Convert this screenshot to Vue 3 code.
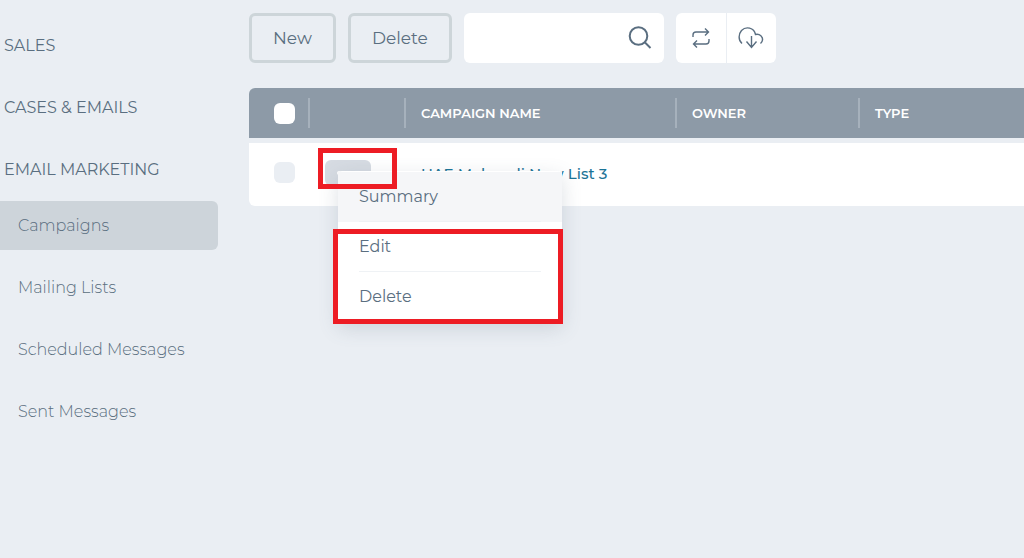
<script setup>
import { ref } from "vue";

const sections = ["Sales", "Cases & Emails", "Email Marketing"];
const links = ["Campaigns", "Mailing Lists", "Scheduled Messages", "Sent Messages"];
const active = ref("Campaigns");

const menu = ["Summary", "Edit", "Delete"];
const hovered = ref("Summary");

const search = ref("");
const allChecked = ref(false);
const campaigns = ref([{ id: 1, name: "UAE Mahendi New List 3", checked: false }]);
</script>

<template>
  <div class="page">
    <nav class="sidebar">
      <h2 v-for="section in sections" :key="section" class="section">{{ section }}</h2>
      <a
        v-for="link in links"
        :key="link"
        href="#"
        class="link"
        :class="{ active: link === active }"
        @click.prevent="active = link"
      >
        {{ link }}
      </a>
    </nav>

    <main class="main">
      <div class="toolbar">
        <button type="button" class="btn">New</button>
        <button type="button" class="btn">Delete</button>
        <div class="search">
          <input v-model="search" type="text" aria-label="Search" />
          <svg width="24" height="24" viewBox="0 0 24 24">
            <circle cx="10.5" cy="10" r="8.8" />
            <path d="M17 16.500l5.500 5.500" />
          </svg>
        </div>
        <div class="group">
          <button type="button" aria-label="Refresh">
            <svg width="20" height="22" viewBox="0 0 20 22">
              <path d="M2 10V8q0-3 3-3h12.500M14 1.500L17.500 5L14 8.500M18 12v2q0 3-3 3H2.500M6 13.500L2.500 17L6 20.500" />
            </svg>
          </button>
          <button type="button" aria-label="Download">
            <svg width="26" height="24" viewBox="0 0 26 24">
              <path d="M4 17.500C0 14 .5 8 3.500 4.500C8 0 16 1.500 17.500 8.500C22 7.500 25 11 24.500 14Q24.300 16 22.500 17.500M13.500 10v11.500M8.500 15.500L13.500 21.500L18.500 15.500" />
            </svg>
          </button>
        </div>
      </div>

      <table class="table">
        <thead>
          <tr>
            <th class="check">
              <input v-model="allChecked" type="checkbox" aria-label="Select all campaigns" />
            </th>
            <th class="actions"></th>
            <th class="name">Campaign Name</th>
            <th class="owner">Owner</th>
            <th>Type</th>
          </tr>
        </thead>
        <tbody>
          <tr v-for="campaign in campaigns" :key="campaign.id">
            <td class="check">
              <input v-model="campaign.checked" type="checkbox" aria-label="Select campaign" />
            </td>
            <td class="actions">
              <div class="more-wrap">
                <button type="button" class="more" aria-label="Actions">
                  <i></i><i></i><i></i>
                </button>
                <div class="menu">
                  <div class="options">
                    <button
                      v-for="item in menu"
                      :key="item"
                      type="button"
                      class="item"
                      :class="{ hover: item === hovered }"
                      @mouseenter="hovered = item"
                    >
                      <span>{{ item }}</span>
                    </button>
                  </div>
                  <div class="mark mark-options"></div>
                </div>
                <div class="mark mark-more"></div>
              </div>
            </td>
            <td><a href="#">{{ campaign.name }}</a></td>
            <td></td>
            <td></td>
          </tr>
        </tbody>
      </table>
    </main>
  </div>
</template>

<style>
body {
  margin: 0;
  background: #eaeef3;
}
</style>

<style scoped>
.page {
  display: flex;
  gap: 31px;
  min-height: 100vh;
  overflow: hidden;
  font-family: Montserrat, Inter, "Open Sans", sans-serif;
  font-size: 16px;
  line-height: 24px;
  color: #5a6e80;
}

.page *,
.page *::before {
  box-sizing: border-box;
}

button,
input {
  font: inherit;
  color: inherit;
}

button {
  cursor: pointer;
}

a {
  text-decoration: none;
}

.sidebar {
  flex: 0 0 218px;
  padding-top: 15px;
}

.section {
  margin: 0;
  padding: 19px 4px;
  font-size: 16px;
  font-weight: 400;
  text-transform: uppercase;
}

.link {
  display: block;
  margin-bottom: 13px;
  padding: 13px 18px 12px;
  border-radius: 0 6px 6px 0;
  color: #5a6e80;
  font-weight: 300;
}

.link.active {
  background: #cdd4da;
}

.main {
  flex: 1;
  min-width: 0;
  padding-top: 13px;
}

.toolbar {
  display: flex;
  gap: 12px;
  height: 50px;
  margin-bottom: 25px;
}

.btn {
  padding: 0 21px;
  border: 3px solid #cdd5d9;
  border-radius: 6px;
  background: none;
  font-size: 17px;
}

.search {
  display: flex;
  align-items: center;
  width: 200px;
  padding-right: 12px;
  border-radius: 6px;
  background: #fff;
}

.search input {
  flex: 1;
  min-width: 0;
  height: 50px;
  padding: 0 14px;
  border: 0;
  background: none;
  outline: none;
}

svg {
  fill: none;
  stroke: #5a6e80;
  stroke-width: 1.4;
}

.search svg {
  stroke-width: 2;
}

.group {
  display: flex;
  border-radius: 6px;
  background: #fff;
}

.group button {
  display: flex;
  align-items: center;
  justify-content: center;
  width: 50px;
  padding: 0;
  border: 0;
  background: none;
}

.group button + button {
  border-left: 1px solid #eaeef3;
}

.table {
  width: 100%;
  border-spacing: 0;
  table-layout: fixed;
}

th {
  position: relative;
  height: 50px;
  padding: 0 16px 1px;
  background: #8d9aa7;
  color: #fff;
  font-size: 13px;
  font-weight: 600;
  text-align: left;
  text-transform: uppercase;
}

th + th::before {
  content: "";
  position: absolute;
  top: 10px;
  left: -1px;
  width: 2px;
  height: 30px;
  background: #a6b1bc;
}

th:first-child {
  border-top-left-radius: 6px;
}

td {
  height: 68px;
  padding: 0 16px 2px;
  border-top: 5px solid #eaeef3;
  background: #fff;
}

td:first-child {
  border-bottom-left-radius: 6px;
}

td a {
  color: #1b7497;
  font-size: 15px;
  font-weight: 500;
}

.check {
  width: 60px;
  padding: 0 0 0 25px;
}

.actions {
  width: 96px;
}

td.check,
td.actions {
  padding-bottom: 4px;
}

.name {
  width: 271px;
}

.owner {
  width: 183px;
}

.check input {
  display: block;
  appearance: none;
  width: 21px;
  height: 21px;
  margin: 0;
  border-radius: 6px;
  background: #fff;
}

td.check input {
  background: #eaeef3;
}

.more-wrap {
  position: relative;
}

.more {
  display: flex;
  align-items: center;
  justify-content: center;
  gap: 5px;
  width: 46px;
  height: 26px;
  padding: 0;
  border: 0;
  border-radius: 6px;
  background: #d6dbe2;
}

.more i {
  width: 4px;
  height: 4px;
  border-radius: 2px;
  background: #fff;
}

.menu {
  position: absolute;
  z-index: 1;
  top: 11px;
  left: 13px;
  width: 224px;
  padding-top: 1px;
  border-radius: 4px;
  background: #fff;
  box-shadow: 0 6px 20px rgba(80, 100, 120, 0.2);
}

.item {
  display: block;
  width: 100%;
  height: 50px;
  padding: 0 21px;
  border: 0;
  background: none;
  text-align: left;
}

.item span {
  display: block;
  padding: 13px 0 12px;
  border-bottom: 1px solid #eff2f5;
}

.item:last-child span {
  border-bottom: 0;
}

.item.hover {
  background: #f5f6f8;
}

.mark {
  position: absolute;
  border: 5px solid #ed1c24;
  pointer-events: none;
}

.mark-more {
  z-index: 2;
  top: -12px;
  left: -7px;
  width: 79px;
  height: 41px;
}

.mark-options {
  top: 58px;
  right: -1px;
  left: -5px;
  height: 95px;
}
</style>
